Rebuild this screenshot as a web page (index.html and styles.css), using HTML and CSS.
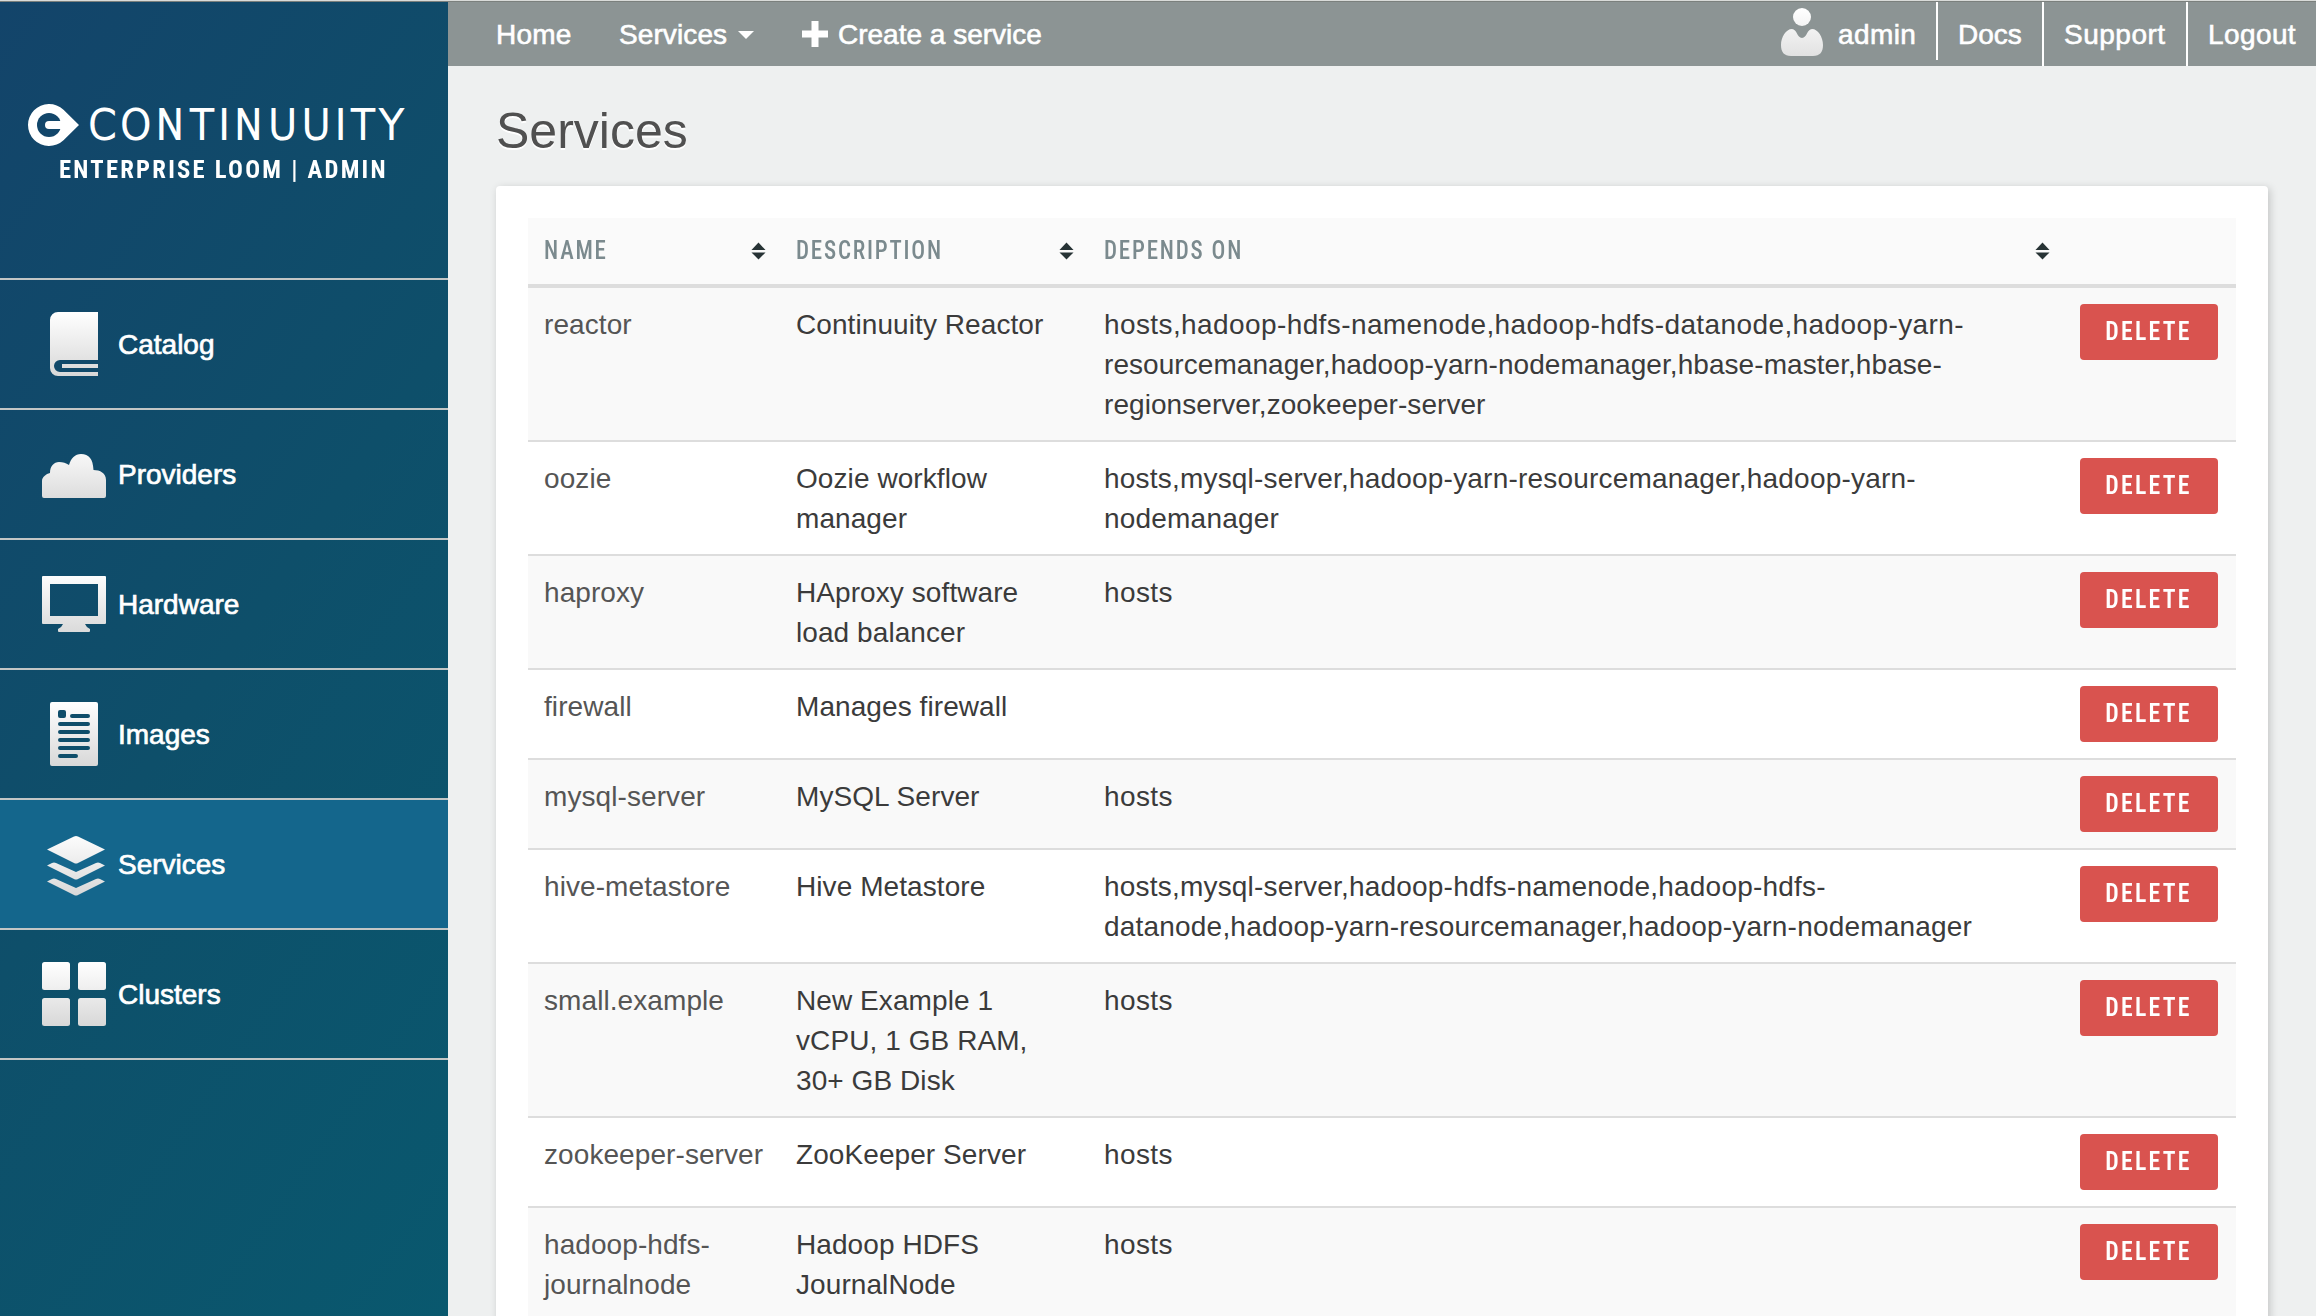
FILE: index.html
```html
<!DOCTYPE html>
<html lang="en">
<head>
<meta charset="utf-8">
<title>Services</title>
<link rel="stylesheet" href="styles.css">
</head>
<body>
<svg class="defs" width="0" height="0" aria-hidden="true">
  <defs>
    <linearGradient id="silver" gradientUnits="userSpaceOnUse" x1="0" y1="0" x2="0" y2="64">
      <stop offset="0" stop-color="#fff"/><stop offset="1" stop-color="#d8d8d8"/>
    </linearGradient>
    <symbol id="sort" viewBox="0 0 16 18"><path d="M8 0L15.500 8H.5zM8 18L.5 10.500h15z" fill="#273335"/></symbol>
  </defs>
</svg>
<div class="page">
  <aside class="sidebar">
    <div class="brand">
      <div class="brand-row">
        <svg width="52" height="42" viewBox="0 0 52 42">
          <mask id="hole"><rect width="52" height="42" fill="#fff"/><circle cx="22" cy="21" r="12" fill="#000"/><path d="M36 17H22a4 4 0 0 0 0 8H34" fill="#fff"/></mask>
          <path mask="url(#hole)" fill="#fff" d="M36.500 5.800A21 21 0 1 0 36.500 36.200L52 21z"/>
        </svg>
        <span class="brand-name">CONTINUUITY</span>
      </div>
      <div class="brand-sub">ENTERPRISE LOOM | ADMIN</div>
    </div>
    <nav class="menu">
      <a class="item"><svg class="icon" viewBox="0 0 64 64"><path d="M16 0H56V48H18a6 6 0 0 0 0 12H56V64H16a8 8 0 0 1-8-8V8a8 8 0 0 1 8-8zM20 52H56V56H20z"/></svg><span>Catalog</span></a>
      <a class="item"><svg class="icon" viewBox="0 0 64 64"><path d="M0 54V39C0 35 4 32 8 31C8 24 12 20 17 20C21 20 24 21 27 23C29 16 33 12 39 12C47 12 51 17 51.500 28C58 28 64 31 64 38V54Q64 56 62 56H2Q0 56 0 54z"/></svg><span>Providers</span></a>
      <a class="item"><svg class="icon" viewBox="0 0 64 64"><path fill-rule="evenodd" d="M1 4H63Q64 4 64 5V51Q64 52 63 52H43Q44 55 48 57V59Q48 60 47 60H17Q16 60 16 59V57Q20 55 21 52H1Q0 52 0 51V5Q0 4 1 4zM8 12V44H56V12z"/></svg><span>Hardware</span></a>
      <a class="item"><svg class="icon" viewBox="0 0 64 64"><path fill-rule="evenodd" d="M10 0H54Q56 0 56 2V62Q56 64 54 64H10Q8 64 8 62V2Q8 0 10 0zM18 8a2 2 0 0 0-2 2v4a2 2 0 0 0 2 2h4a2 2 0 0 0 2-2v-4a2 2 0 0 0-2-2zM30 12a2 2 0 0 0 0 4H46a2 2 0 0 0 0-4zM18 20a2 2 0 0 0 0 4H46a2 2 0 0 0 0-4zM18 28a2 2 0 0 0 0 4H46a2 2 0 0 0 0-4zM18 36a2 2 0 0 0 0 4H46a2 2 0 0 0 0-4zM18 44a2 2 0 0 0 0 4H46a2 2 0 0 0 0-4zM18 52a2 2 0 0 0 0 4H34a2 2 0 0 0 0-4z"/></svg><span>Images</span></a>
      <a class="item active"><svg class="icon" viewBox="0 0 64 64"><path d="M5 17.500L32 4.500Q34 3.500 36 4.500L63 17.500L36 31Q34 32 32 31zM5 33.500L10 31Q12 30 14 31L34 40L54 31Q56 30 58 31L63 33.500L36 47Q34 48 32 47zM5 49.500L10 47Q12 46 14 47L34 56L54 47Q56 46 58 47L63 49.500L36 63Q34 64 32 63z"/></svg><span>Services</span></a>
      <a class="item"><svg class="icon" viewBox="0 0 64 64"><rect width="28" height="28" rx="2.500"/><rect x="36" width="28" height="28" rx="2.500"/><rect y="36" width="28" height="28" rx="2.500"/><rect x="36" y="36" width="28" height="28" rx="2.500"/></svg><span>Clusters</span></a>
    </nav>
  </aside>
  <main class="main">
    <header class="topbar">
      <nav class="links">
        <a class="home">Home</a>
        <a class="drop">Services<svg width="16" height="8" viewBox="0 0 16 8"><path d="M0 0H16L8 8z" fill="#fff"/></svg></a>
        <a class="create"><svg width="26" height="26" viewBox="0 0 26 26"><path d="M9.500 0H16.500V9.500H26V16.500H16.500V26H9.500V16.500H0V9.500H9.500z" fill="#fff"/></svg>Create a service</a>
      </nav>
      <nav class="account">
        <a class="user"><svg width="42" height="48" viewBox="0 0 42 48" fill="url(#silver)"><circle cx="21" cy="9" r="9"/><path d="M0 37C0 29 5 21 11 21C16 21 16 30 21 30C26 30 26 21 31 21C37 21 42 29 42 37C42 44 39 48 32 48H10C3 48 0 44 0 37z"/></svg><span>admin</span></a>
        <a class="docs">Docs</a>
        <a class="support">Support</a>
        <a class="logout">Logout</a>
      </nav>
    </header>
    <h1>Services</h1>
    <section class="panel">
      <table>
        <colgroup><col class="c-name"><col class="c-desc"><col class="c-deps"><col class="c-act"></colgroup>
        <thead><tr>
          <th><div><span>NAME</span><svg width="15" height="18"><use href="#sort"/></svg></div></th>
          <th><div><span>DESCRIPTION</span><svg width="15" height="18"><use href="#sort"/></svg></div></th>
          <th><div><span>DEPENDS ON</span><svg width="15" height="18"><use href="#sort"/></svg></div></th>
          <th></th>
        </tr></thead>
        <tbody>
          <tr><td>reactor</td><td>Continuuity Reactor</td><td>hosts,hadoop-hdfs-namenode,hadoop-hdfs-datanode,hadoop-yarn-<span class="tight">resourcemanager,hadoop-yarn-nodemanager,hbase-master,hbase-regionserver,zookeeper-server</span></td><td><button><span>DELETE</span></button></td></tr>
          <tr><td>oozie</td><td>Oozie workflow manager</td><td><span class="snug">hosts,mysql-server,hadoop-yarn-resourcemanager,hadoop-yarn-nodemanager</span></td><td><button><span>DELETE</span></button></td></tr>
          <tr><td>haproxy</td><td>HAproxy software load balancer</td><td>hosts</td><td><button><span>DELETE</span></button></td></tr>
          <tr><td>firewall</td><td>Manages firewall</td><td></td><td><button><span>DELETE</span></button></td></tr>
          <tr><td>mysql-server</td><td>MySQL Server</td><td>hosts</td><td><button><span>DELETE</span></button></td></tr>
          <tr><td>hive-metastore</td><td>Hive Metastore</td><td><span class="snug">hosts,mysql-server,hadoop-hdfs-namenode,hadoop-hdfs-datanode,hadoop-yarn-resourcemanager,hadoop-yarn-nodemanager</span></td><td><button><span>DELETE</span></button></td></tr>
          <tr><td>small.example</td><td>New Example 1 vCPU, 1 GB RAM, 30+ GB Disk</td><td>hosts</td><td><button><span>DELETE</span></button></td></tr>
          <tr><td>zookeeper-server</td><td>ZooKeeper Server</td><td>hosts</td><td><button><span>DELETE</span></button></td></tr>
          <tr><td>hadoop-hdfs-journalnode</td><td>Hadoop HDFS JournalNode</td><td>hosts</td><td><button><span>DELETE</span></button></td></tr>
        </tbody>
      </table>
    </section>
  </main>
</div>
</body>
</html>
```
FILE: styles.css
```css
* { box-sizing: border-box; }
html, body { margin: 0; height: 100%; overflow: hidden; }
body {
  display: flex;
  flex-direction: column;
  font: 28px/40px "Liberation Sans", Arial, sans-serif;
  color: #3b3b3b;
  background: #eef0f0;
  border-top: 1px solid #d9dbd9;
}
svg { flex: none; display: block; }
.defs { position: absolute; }
.page { flex: 1; min-height: 0; display: flex; border-top: 1px solid #7b807d; }

/* Sidebar */
.sidebar {
  width: 448px;
  flex: none;
  background: linear-gradient(125deg, #13446a 0%, #0e4f6a 50%, #09586e 100%);
  color: #fff;
}
.brand { height: 276px; padding: 102px 0 0 27px; }
.brand-row { display: flex; align-items: center; height: 42px; }
.brand-name {
  margin-left: 9px;
  font: 200 40px/42px "DejaVu Sans Light", "DejaVu Sans", sans-serif;
  letter-spacing: 4.1px;
  -webkit-text-stroke: 2px #fff;
  white-space: nowrap;
}
.brand-sub {
  width: max-content;
  margin: 5px 0 0 32px;
  font: 700 26.5px/36px Roboto, sans-serif;
  font-stretch: 75%;
  letter-spacing: 2.4px;
  white-space: nowrap;
  transform: scaleX(.93);
  transform-origin: left;
}
.menu { border-bottom: 2px solid #c3c6c5; }
.item {
  display: flex;
  align-items: center;
  gap: 12px;
  height: 130px;
  padding-left: 42px;
  border-top: 2px solid #c3c6c5;
  -webkit-text-stroke: .7px #fff;
}
.item span { padding-top: 2px; }
.item.active { background: #14668c; }
.icon { width: 64px; height: 64px; fill: url(#silver); stroke: none; }

/* Top bar */
.main { flex: 1; min-width: 0; overflow: hidden; }
.topbar {
  height: 64px;
  display: flex;
  justify-content: space-between;
  background: #8c9494;
  color: #fff;
  -webkit-text-stroke: .6px #fff;
}
.topbar svg { stroke: none; }
.links, .account { display: flex; }
.links { padding: 13px 0 0 48px; }
.links a { display: flex; align-items: center; height: 40px; }
.home { width: 123px; letter-spacing: .2px; }
.drop { width: 183px; gap: 11px; letter-spacing: .1px; }
.create { gap: 10px; }
.create svg { margin-top: -3px; }
.account a { padding: 13px 20px 11px; height: 64px; border-right: 2px solid #fff; }
.account .user { display: flex; align-items: center; gap: 15px; height: 58px; padding: 6px 0 4px; width: 157px; letter-spacing: .4px; }
.user span { padding-top: 6px; }
.account .docs { width: 106px; }
.account .support { width: 144px; letter-spacing: .5px; }
.account .logout { width: 128px; border-right: 0; letter-spacing: .4px; }

h1 {
  margin: 0;
  height: 120px;
  padding: 35px 0 0 48px;
  font-size: 50px;
  font-weight: 400;
  line-height: 60px;
  color: #505050;
  text-shadow: 0 2px 0 #fff;
}

/* Services table */
.panel {
  width: 1772px;
  margin-left: 48px;
  padding: 32px;
  background: #fff;
  border-radius: 4px;
  box-shadow: 2px 2px 8px rgba(0, 0, 0, .18);
}
table { width: 1708px; table-layout: fixed; border-collapse: separate; border-spacing: 0; }
.c-name { width: 252px; }
.c-desc { width: 308px; }
.c-deps { width: 976px; }
.c-act { width: 172px; }
th {
  height: 70px;
  padding: 16px 14px 17px 16px;
  background: #fafafa;
  border-bottom: 4px solid #ddd;
  font: 500 25.5px/33px Roboto, sans-serif;
  font-stretch: 75%;
  letter-spacing: 2px;
  color: #7b8a8e;
  text-align: left;
}
th div { display: flex; align-items: center; justify-content: space-between; }
th span { transform: scaleX(.9); transform-origin: left; }
td { padding: 17px 16px 15px; vertical-align: top; border-top: 2px solid #ddd; }
tbody tr:first-child td { border-top: 0; }
tbody tr:nth-child(odd) { background: #f9f9f9; }
td:nth-child(1) { padding-right: 10px; color: #555; letter-spacing: .08px; }
td:nth-child(2) { letter-spacing: .08px; }
td:nth-child(3) { padding-right: 40px; letter-spacing: .4px; }
td .tight { letter-spacing: .06px; }
td .snug { letter-spacing: .2px; }
button {
  display: block;
  width: 138px;
  height: 56px;
  margin: -1px 0 1px;
  padding: 0;
  border: 0;
  border-radius: 4px;
  background: #d9534f;
  color: #fff;
  font: 600 25px/56px Roboto, sans-serif;
  font-stretch: 75%;
  letter-spacing: 2.4px;
}
button span { display: inline-block; transform: scaleX(.95); }
```
